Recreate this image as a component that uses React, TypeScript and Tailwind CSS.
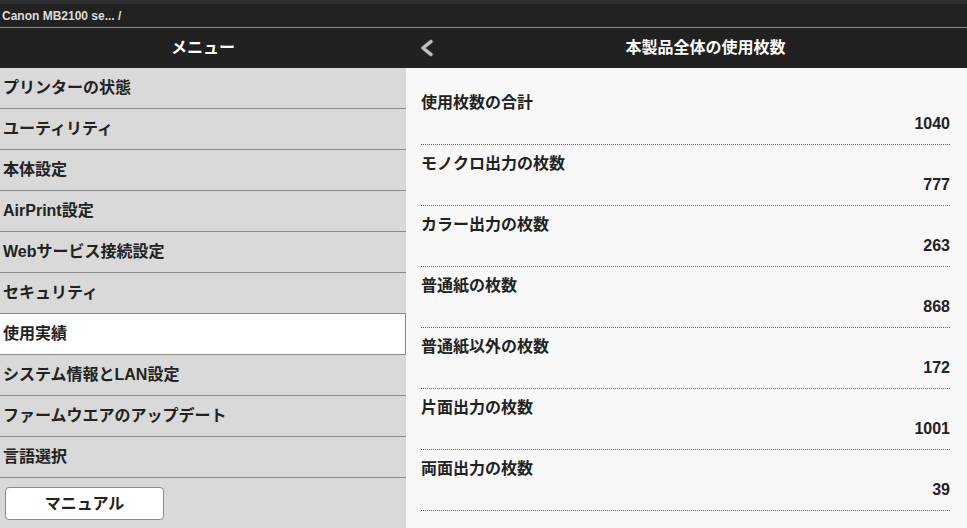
const menuItems = [
  "プリンターの状態",
  "ユーティリティ",
  "本体設定",
  "AirPrint設定",
  "Webサービス接続設定",
  "セキュリティ",
  "使用実績",
  "システム情報とLAN設定",
  "ファームウエアのアップデート",
  "言語選択",
];

const counts = [
  { label: "使用枚数の合計", value: "1040" },
  { label: "モノクロ出力の枚数", value: "777" },
  { label: "カラー出力の枚数", value: "263" },
  { label: "普通紙の枚数", value: "868" },
  { label: "普通紙以外の枚数", value: "172" },
  { label: "片面出力の枚数", value: "1001" },
  { label: "両面出力の枚数", value: "39" },
];

export default function App() {
  return (
    <div
      className="flex h-[528px] w-[967px] flex-col overflow-hidden bg-[#f8f8f8] text-[#222]"
      style={{ fontFamily: '"Liberation Sans", "Noto Sans CJK JP", sans-serif' }}
    >
      <div className="h-[4px] bg-[#2e2e2e]" />
      <div className="flex h-[24px] items-center border-b border-[#8a8a8a] bg-[#222] px-[2px] text-[12px] font-bold text-[#dcdcdc]">
        Canon MB2100 se... /
      </div>
      <div className="flex h-[40px] bg-[#212121] text-[16px] font-bold text-white">
        <div className="flex w-[406px] items-center justify-center">メニュー</div>
        <div className="relative flex flex-1 items-center justify-center pl-[38px]">
          <svg className="absolute left-[12px] top-[11px]" width="17" height="18" viewBox="0 0 17 18">
            <path d="M13 2.5 L5 9 L13 15.5" fill="none" stroke="#3a3a3a" strokeWidth="5" strokeLinecap="round" strokeLinejoin="round" />
            <path d="M13 2.5 L5 9 L13 15.5" fill="none" stroke="#c2c2c2" strokeWidth="3.2" strokeLinecap="round" strokeLinejoin="round" />
          </svg>
          本製品全体の使用枚数
        </div>
      </div>
      <div className="flex flex-1">
        <aside className="w-[406px] bg-[#d9d9d9]">
          {menuItems.map((item) => (
            <div
              key={item}
              className={`flex h-[41px] items-center border-b border-[#8a8a8a] pl-[3px] text-[16px] font-bold ${
                item === "使用実績" ? "border-r bg-white" : ""
              }`}
            >
              {item}
            </div>
          ))}
          <div className="px-[5px] pt-[9px]">
            <button className="flex h-[33px] w-[159px] items-center justify-center rounded-[4px] border border-[#8a8a8a] bg-white text-[16px] font-bold text-[#222]">
              マニュアル
            </button>
          </div>
        </aside>
        <main className="flex-1 pl-[15px] pr-[17px] pt-[16px]">
          {counts.map((c) => (
            <div key={c.label} className="border-b border-dotted border-[#666] pb-[10px] pt-[8px]">
              <div className="text-[16px] font-bold leading-[22px]">{c.label}</div>
              <div className="text-right text-[16px] font-bold leading-[20px]">{c.value}</div>
            </div>
          ))}
        </main>
      </div>
    </div>
  );
}
